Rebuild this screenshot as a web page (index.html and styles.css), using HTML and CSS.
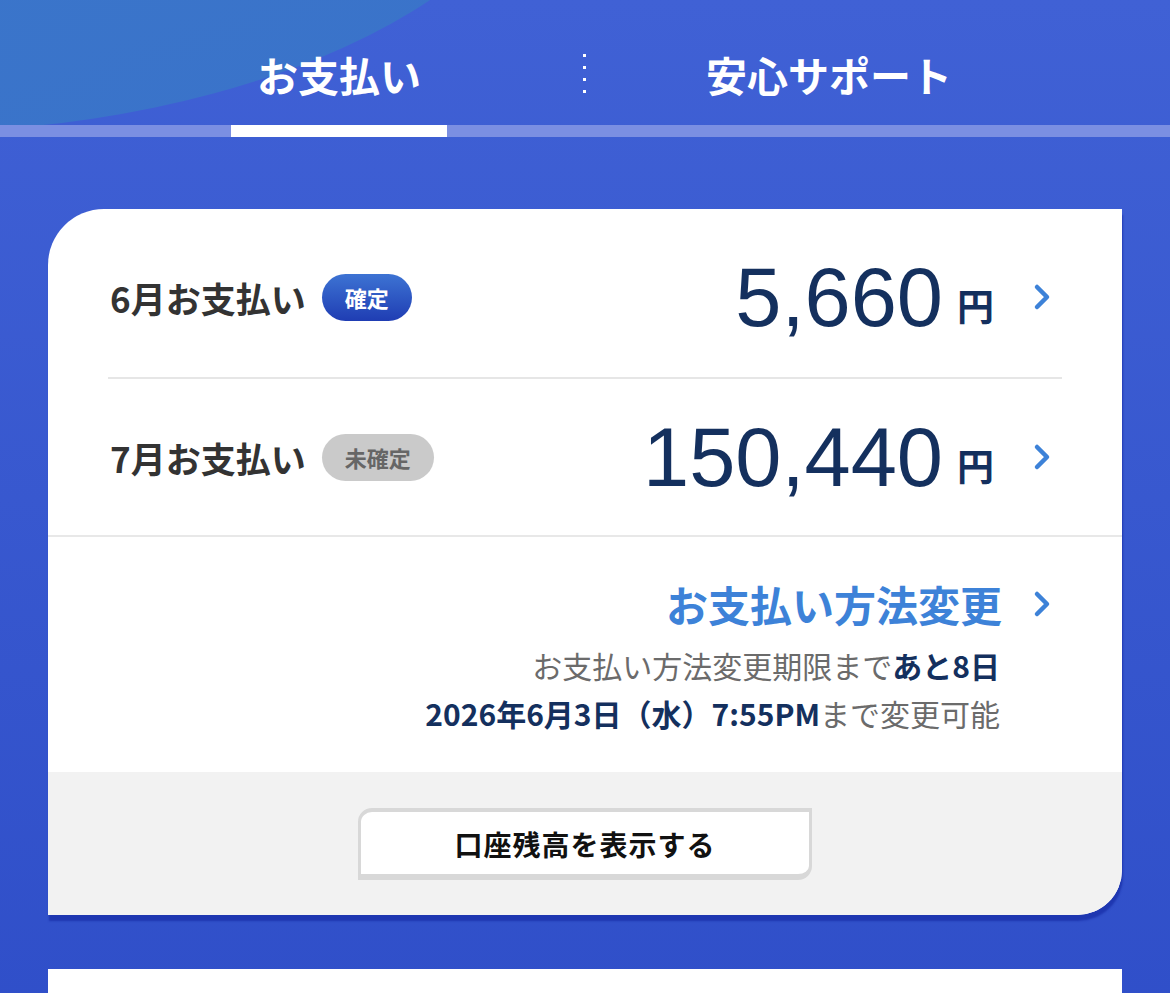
FILE: index.html
```html
<!DOCTYPE html>
<html lang="ja">
<head>
    <meta charset="UTF-8">
    <meta name="viewport" content="width=device-width, initial-scale=1.0">
    <title>お支払い</title>
    <link rel="stylesheet" href="styles.css">
</head>
<body>
    <header class="header">
        <nav class="tabs">
            <div class="tab tab--active">お支払い</div>
            <div class="tab-sep"></div>
            <div class="tab">安心サポート</div>
        </nav>
        <div class="tab-track">
            <div class="tab-indicator"></div>
        </div>
    </header>

    <main class="main">
        <section class="card">
            <div class="pay-row pay-row--first">
                <div class="pay-label">6月お支払い<span class="badge badge--fixed">確定</span></div>
                <div class="pay-amount">
                    <div class="amount"><span class="amount-num">5,660</span><span class="yen">円</span></div>
                    <svg class="chev" viewBox="0 0 20 28"><path d="M5 4 L15 14 L5 24"/></svg>
                </div>
            </div>
            <div class="pay-row">
                <div class="pay-label">7月お支払い<span class="badge badge--pending">未確定</span></div>
                <div class="pay-amount">
                    <div class="amount"><span class="amount-num">150,440</span><span class="yen">円</span></div>
                    <svg class="chev" viewBox="0 0 20 28"><path d="M5 4 L15 14 L5 24"/></svg>
                </div>
            </div>

            <div class="change">
                <a class="change-link" href="#">お支払い方法変更<svg class="chev" viewBox="0 0 20 28"><path d="M5 4 L15 14 L5 24"/></svg></a>
                <p class="change-note">お支払い方法変更期限まで<strong>あと8日</strong></p>
                <p class="change-note"><strong>2026年6月3日（水）7:55PM</strong>まで変更可能</p>
            </div>

            <div class="card-footer">
                <button class="balance-btn">口座残高を表示する</button>
            </div>
        </section>

        <section class="card card--next"></section>
    </main>
</body>
</html>
```

FILE: styles.css
```css
body {
    margin: 0;
    min-height: 993px;
    background: linear-gradient(#4061d5, #2d4cc7);
    font-family: "Noto Sans CJK JP", "Noto Sans", sans-serif;
    color: #333;
    overflow: hidden;
}

.header {
    position: relative;
    overflow: hidden;
}

/* light blue swoosh in the top-left corner */
.header::before {
    content: "";
    position: absolute;
    left: -763px;
    top: -533px;
    width: 1326px;
    height: 666px;
    border-radius: 50%;
    background: linear-gradient(160deg, #3b7bcd, #3a72c9);
}

.tabs {
    position: relative;
    display: grid;
    grid-template-columns: 488px 4px 484px;
    align-items: center;
    height: 125px;
    padding-left: 95px;
    box-sizing: border-box;
    padding-top: 24px;
}

.tab {
    text-align: center;
    color: #fff;
    font-size: 41px;
    font-weight: bold;
    line-height: 1;
}

.tab-sep {
    width: 3px;
    height: 39px;
    margin-top: -2px;
    background: repeating-linear-gradient(#fff 0 3px, transparent 3px 12px);
}

.tab-track {
    position: relative;
    height: 12px;
    background-color: #7b8fe2;
    padding-left: 231px;
}

.tab-indicator {
    width: 216px;
    height: 12px;
    background-color: #fff;
}

.main {
    padding: 72px 48px 0;
}

.card {
    background-color: #fff;
    border-radius: 56px 0 45px 0;
    overflow: hidden;
    box-shadow: 1px 6px 2px rgba(18, 38, 160, 0.6);
}

.pay-row {
    display: flex;
    align-items: center;
    justify-content: space-between;
    height: 156px;
    margin: 0 60px;
    padding: 0 10px 0 2px;
}

.pay-row--first {
    box-sizing: border-box;
    height: 170px;
    padding-top: 8px;
    border-bottom: 2px solid #e6e6e6;
}

.pay-label {
    display: flex;
    align-items: center;
    font-size: 35px;
    font-weight: bold;
    color: #333;
}

.badge {
    display: inline-flex;
    align-items: center;
    height: 47px;
    margin-left: 16px;
    padding: 0 23px;
    border-radius: 24px;
    font-size: 22px;
    font-weight: bold;
}

.badge--fixed {
    background: linear-gradient(#3d73d3, #1f3db3);
    color: #fff;
}

.badge--pending {
    background-color: #cacaca;
    color: #666;
}

.pay-amount {
    display: flex;
    align-items: center;
}

.amount {
    display: flex;
    align-items: baseline;
    color: #14305e;
}

.amount-num {
    font-family: "Liberation Sans", Arial, sans-serif;
    font-size: 83px;
    line-height: 1;
}

.yen {
    position: relative;
    top: -5px;
    margin-left: 14px;
    font-size: 37px;
    font-weight: bold;
}

.chev {
    width: 20px;
    height: 28px;
    margin-left: 38px;
    fill: none;
    stroke: #3d82d8;
    stroke-width: 4.5;
    stroke-linecap: round;
    stroke-linejoin: round;
}

.change {
    border-top: 2px solid #e8e8e8;
    padding: 40px 70px 35px 0;
    text-align: right;
}

.change-link {
    display: inline-flex;
    align-items: center;
    color: #3d82d8;
    font-size: 42px;
    font-weight: bold;
    line-height: 53px;
    text-decoration: none;
}

.change-link .chev {
    margin-left: 30px;
}

.change-note {
    margin: 0 52px 0 0;
    font-size: 30px;
    line-height: 48px;
    color: #6b6b6b;
}

.change-link + .change-note {
    margin-top: 11px;
}

.change-note strong {
    color: #14305e;
}

.card-footer {
    display: flex;
    justify-content: center;
    background-color: #f2f2f2;
    padding: 36px 0 35px;
}

.balance-btn {
    width: 454px;
    height: 72px;
    padding-top: 3px;
    background-color: #fff;
    border: solid #d8d8d8;
    border-width: 4px 3px 6px 3px;
    border-radius: 14px 0 14px 0;
    font-family: "Noto Sans CJK JP", sans-serif;
    font-size: 28px;
    font-weight: bold;
    color: #111;
    letter-spacing: 1px;
    cursor: pointer;
}

.card--next {
    margin-top: 54px;
    height: 200px;
    border-radius: 0;
    box-shadow: none;
}
```
